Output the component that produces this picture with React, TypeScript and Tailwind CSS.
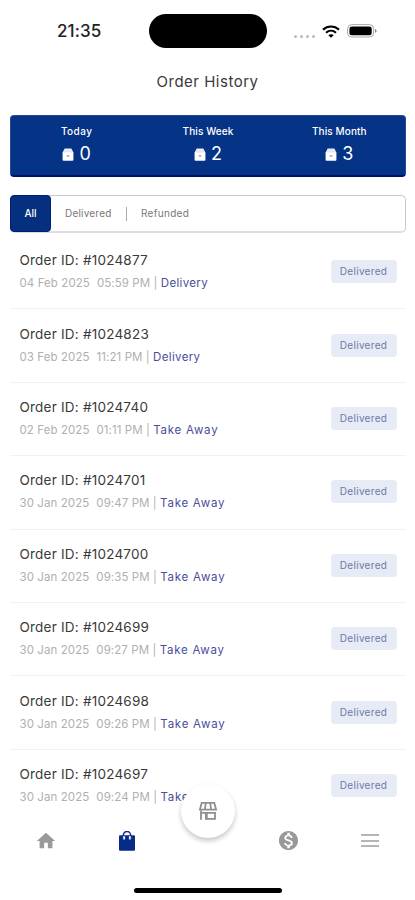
import { MdHome, MdMonetizationOn } from "react-icons/md";

const stats = [
  { label: "Today", value: 0, tracking: "tracking-[0.45px]" },
  { label: "This Week", value: 2, tracking: "tracking-[0.1px]" },
  { label: "This Month", value: 3, tracking: "tracking-[0.1px]" },
];

const orders = [
  { id: "1024877", date: "04 Feb 2025", time: "05:59 PM", type: "Delivery" },
  { id: "1024823", date: "03 Feb 2025", time: "11:21 PM", type: "Delivery" },
  { id: "1024740", date: "02 Feb 2025", time: "01:11 PM", type: "Take Away" },
  { id: "1024701", date: "30 Jan 2025", time: "09:47 PM", type: "Take Away" },
  { id: "1024700", date: "30 Jan 2025", time: "09:35 PM", type: "Take Away" },
  { id: "1024699", date: "30 Jan 2025", time: "09:27 PM", type: "Take Away" },
  { id: "1024698", date: "30 Jan 2025", time: "09:26 PM", type: "Take Away" },
  { id: "1024697", date: "30 Jan 2025", time: "09:24 PM", type: "Take Away" },
];

const BoxIcon = () => (
  <svg width="12" height="13" viewBox="0 0 12 13" fill="none">
    <path d="M2.600 0.400h6.800L11.200 4.200H0.800z" fill="#e8ecf7" />
    <rect x="0.600" y="3.700" width="10.800" height="9.100" rx="0.800" fill="#fff" />
    <path d="M1.200 4h9.600" stroke="#c0c9e4" strokeWidth="0.500" />
    <path d="M4.700 7.900h2.600" stroke="#6d82bb" strokeWidth="1.100" />
  </svg>
);

const WifiIcon = () => (
  <svg width="18" height="13" viewBox="0 0 18 13" fill="none">
    <path d="M1 4.600c4.600-4.200 11.400-4.200 16 0" stroke="#000" strokeWidth="2.100" />
    <path d="M4 7.700c2.900-2.600 7.100-2.600 10 0" stroke="#000" strokeWidth="2.100" />
    <path d="M6.300 10.200c1.600-1.300 3.800-1.300 5.400 0L9 12.800z" fill="#000" />
  </svg>
);

const BatteryIcon = () => (
  <svg width="30" height="14" viewBox="0 0 30 14" fill="none">
    <rect x="0.600" y="0.600" width="26" height="12.400" rx="4" stroke="#a8a8a8" strokeWidth="1" />
    <rect x="2.400" y="2.400" width="22.300" height="8.800" rx="2.300" fill="#000" />
    <path d="M28 5v3.800c1-.3 1.500-1 1.500-1.900S29 5.300 28 5z" fill="#888" />
  </svg>
);

const BagIcon = () => (
  <svg width="16" height="20" viewBox="0 0 16 20" fill="none">
    <path d="M4.400 5V4a3.600 3.600 0 0 1 7.200 0v1" stroke="#132f86" strokeWidth="1.500" />
    <rect x="0" y="4.300" width="16" height="15.500" rx="1" fill="#062c86" />
    <path
      d="M4.300 5.200v2.500a.8.8 0 0 0 1.600 0V5.200M10.100 5.200v2.500a.8.8 0 0 0 1.600 0V5.200"
      fill="#fff"
      stroke="#fff"
      strokeWidth="0.300"
    />
  </svg>
);

const StoreIcon = () => (
  <svg width="20" height="20" viewBox="0 0 20 20" fill="none" stroke="#8c9092" strokeWidth="1.800">
    <path d="M3.700 1.900h12.600l1.800 6.800H1.900z" />
    <path d="M7.800 1.900L6.900 8.700M12.200 1.900l.9 6.800" />
    <path d="M3 9.500v9.300M7.900 12v6.800M3 11.900h5" />
    <path d="M8.800 11.900H17v6H8.800z" />
  </svg>
);

const StatusBar = () => (
  <div className="flex h-[62px] shrink-0 items-center pl-[57px]">
    <span className="w-[92px] pt-px text-[17px] font-medium tracking-[0.1px] text-[#222]">21:35</span>
    <div className="h-[34px] w-[118px] rounded-full bg-black" />
    <div className="ml-[27px] flex items-center">
      <div className="mt-[10px] flex gap-[3px]">
        <span className="h-[3px] w-[3px] rounded-full bg-[#bbb]" />
        <span className="h-[3px] w-[3px] rounded-full bg-[#bbb]" />
        <span className="h-[3px] w-[3px] rounded-full bg-[#bbb]" />
        <span className="h-[3px] w-[3px] rounded-full bg-[#bbb]" />
      </div>
      <div className="ml-[7px]">
        <WifiIcon />
      </div>
      <div className="ml-[7px]">
        <BatteryIcon />
      </div>
    </div>
  </div>
);

const StatsCard = () => (
  <div className="mr-[9px] ml-[10px] mt-[12px] grid h-[62px] shrink-0 grid-cols-3 rounded-[4px] border border-[#274a98] border-b-2 border-b-[#000e68] bg-[#053385] text-white">
    {stats.map((stat) => (
      <div key={stat.label} className="flex flex-col items-center pt-[8px]">
        <span className={`text-[10px] leading-[14px] font-medium whitespace-nowrap ${stat.tracking}`}>
          {stat.label}
        </span>
        <div className="mt-[5px] flex items-center gap-[5px]">
          <BoxIcon />
          <span className="text-[18px] leading-[22px]">{stat.value}</span>
        </div>
      </div>
    ))}
  </div>
);

const FilterTabs = () => (
  <div className="mr-[9px] ml-[10px] mt-[18px] flex h-[38px] shrink-0 items-center rounded-[5px] border border-[#c9c9c9] border-b-2 border-b-[#dedede] text-[10px] text-[#777]">
    <div className="-my-px -ml-px flex h-[37px] w-[41px] items-center justify-center self-start rounded-[4px] border border-[#001e74] bg-[#053080] font-medium text-white">
      All
    </div>
    <span className="ml-[14px] w-[48px] tracking-[0.2px]">Delivered</span>
    <span className="ml-[13px] h-[14px] w-px bg-[#aaa]" />
    <span className="ml-[14px] tracking-[0.3px]">Refunded</span>
  </div>
);

const OrderList = () => (
  <div className="mt-[3px] h-[568px] shrink-0 overflow-hidden pr-[9px] pl-[10px]">
    {orders.map((order) => (
      <div
        key={order.id}
        className="flex h-[73.400px] items-center justify-between border-b border-[#f2f2f2] pr-[9.500px] pl-[9.500px]"
      >
        <div className="pb-px whitespace-nowrap">
          <p className="text-[13.500px] leading-[20px] tracking-[0.22px] text-[#3a3a3a]">Order ID: #{order.id}</p>
          <p className="mt-[3px] text-[11.500px] leading-[20px] tracking-[0.08px] text-[#b0b0b0]">
            {order.date}
            <span className="ml-[7px]">{order.time} | </span>
            <span
              className={
                order.type === "Delivery"
                  ? "tracking-[0.35px] text-[#4a4e9c]"
                  : "tracking-[0.75px] text-[#4a4e9c]"
              }
            >
              {order.type}
            </span>
          </p>
        </div>
        <span className="mb-px flex h-[23px] w-[66px] items-center justify-center rounded-[4px] bg-[#e6ebf5] text-[10px] tracking-[0.3px] text-[#6f79a8]">
          Delivered
        </span>
      </div>
    ))}
  </div>
);

const BottomNav = () => (
  <div className="relative flex grow flex-col justify-between bg-white pb-[7px]">
    <div className="grid h-[73px] grid-cols-5 items-center justify-items-center px-[5px] text-[#999]">
      <MdHome size={22} />
      <BagIcon />
      <span />
      <MdMonetizationOn size={23} />
      <div className="flex flex-col gap-[3.500px]">
        <span className="h-[2px] w-[18px] bg-[#b5b5b5]" />
        <span className="h-[2px] w-[18px] bg-[#b5b5b5]" />
        <span className="h-[2px] w-[18px] bg-[#b5b5b5]" />
      </div>
    </div>
    <div className="ml-[134px] h-[5px] w-[148px] rounded-full bg-black" />
    <div className="absolute top-[-20px] left-[181px] flex h-[54px] w-[54px] items-center justify-center rounded-full bg-white shadow-[0_3px_5px_rgba(0,0,0,0.22)]">
      <StoreIcon />
    </div>
  </div>
);

export default function App() {
  return (
    <div className="flex h-[900px] w-[415px] flex-col overflow-hidden bg-white font-['Inter',sans-serif]">
      <StatusBar />
      <h1 className="mt-[10px] shrink-0 text-center text-[15px] leading-[20px] tracking-[0.5px] text-[#3a3a3a]">
        Order History
      </h1>
      <div className="h-[11px] shrink-0" />
      <StatsCard />
      <FilterTabs />
      <OrderList />
      <BottomNav />
    </div>
  );
}
